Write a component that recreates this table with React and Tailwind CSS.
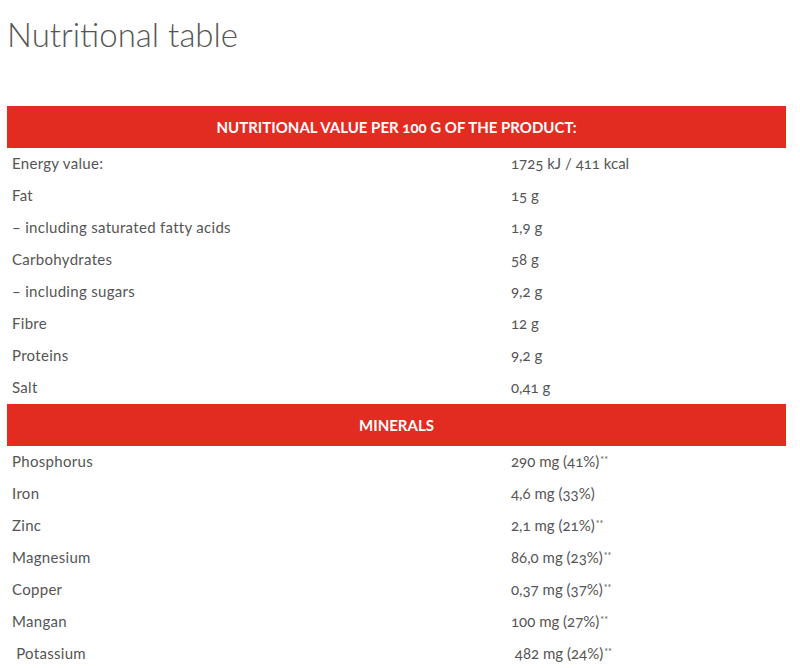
const nutrition = [
  ["Energy value:", "1725 kJ / 411 kcal"],
  ["Fat", "15 g"],
  ["– including saturated fatty acids", "1,9 g"],
  ["Carbohydrates", "58 g"],
  ["– including sugars", "9,2 g"],
  ["Fibre", "12 g"],
  ["Proteins", "9,2 g"],
  ["Salt", "0,41 g"],
];

const minerals = [
  ["Phosphorus", "290 mg (41%)", true],
  ["Iron", "4,6 mg (33%)", false],
  ["Zinc", "2,1 mg (21%)", true],
  ["Magnesium", "86,0 mg (23%)", true],
  ["Copper", "0,37 mg (37%)", true],
  ["Mangan", "100 mg (27%)", true],
  ["\u00a0Potassium", "\u00a0482 mg (24%)", true],
];

function HeadRow({ children }) {
  return (
    <tr>
      <th
        colSpan={2}
        className="h-[42px] bg-[#e22c21] pt-[1px] text-center text-[15px] font-bold uppercase text-white"
      >
        {children}
      </th>
    </tr>
  );
}

function Row({ label, value, star }) {
  return (
    <tr className="h-[32px]">
      <td className="w-[499px] px-[5px] pb-[1px] align-middle tracking-[0.3px]">{label}</td>
      <td className="px-[5px] pb-[1px] align-middle">
        {value}
        {star && <sup className="ml-[1px] text-[9px]">**</sup>}
      </td>
    </tr>
  );
}

export default function App() {
  return (
    <div className="min-h-[668px] bg-white pt-[14px] font-['Lato','Open_Sans',sans-serif] text-[#555] oldstyle-nums">
      <h1 className="ml-[7px] text-[33px] font-light leading-[40px] text-[#555]">
        Nutritional table
      </h1>

      <table className="ml-[7px] mt-[52px] w-[779px] border-collapse text-[15px]">
        <tbody>
          <HeadRow>Nutritional value per 100 g of the product:</HeadRow>
          {nutrition.map(([l, v]) => (
            <Row key={l} label={l} value={v} />
          ))}
          <HeadRow>Minerals</HeadRow>
          {minerals.map(([l, v, s]) => (
            <Row key={l} label={l} value={v} star={s} />
          ))}
        </tbody>
      </table>
    </div>
  );
}
